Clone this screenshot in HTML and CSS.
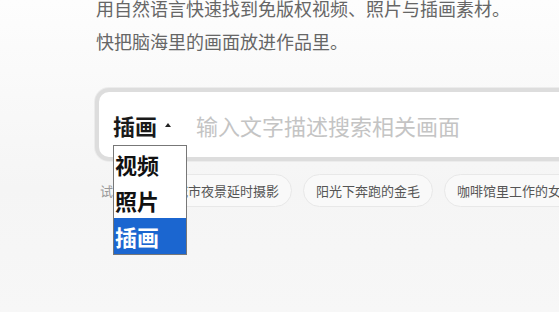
FILE: index.html
```html
<!DOCTYPE html>
<html lang="zh-CN">
<head>
<meta charset="utf-8">
<link rel="stylesheet" href="styles.css">
</head>
<body>
<main class="hero">
  <p class="intro">用自然语言快速找到免版权视频、照片与插画素材。<br>快把脑海里的画面放进作品里。</p>
  <div class="search">
    <div class="type">
      <span class="type-label">插画</span>
      <span class="caret"></span>
      <ul class="options">
        <li class="opt">视频</li>
        <li class="opt">照片</li>
        <li class="opt selected">插画</li>
      </ul>
    </div>
    <span class="placeholder">输入文字描述搜索相关画面</span>
  </div>
  <div class="tries">
    <span class="tries-label">试试看：</span>
    <span class="chip">城市夜景延时摄影</span>
    <span class="chip">阳光下奔跑的金毛</span>
    <span class="chip">咖啡馆里工作的女孩</span>
  </div>
</main>
</body>
</html>
```
FILE: styles.css
```css
html, body {
  margin: 0;
  padding: 0;
  height: 100%;
  overflow: hidden;
}
body {
  background: linear-gradient(#fdfdfd, #f5f5f5 60%, #f7f7f7);
  font-family: "Noto Sans CJK SC", "Noto Sans", sans-serif;
}
.hero {
  padding-left: 96px;
  width: 800px;
}
.intro {
  margin: -8px 0 0 0;
  font-size: 18px;
  line-height: 33px;
  color: #666;
}
.search {
  position: relative;
  margin: 30px 0 0 -1px;
  width: 700px;
  height: 65px;
  border: 4px solid #dddddd;
  border-radius: 14px;
  background: #fff;
  box-shadow: 0 0 0 1px #ececec;
  display: flex;
  align-items: center;
  padding-left: 14px;
}
.type {
  position: relative;
  display: flex;
  align-items: center;
  width: 83px;
}
.type-label {
  font-size: 22px;
  font-weight: 700;
  color: #1a1a1a;
}
.caret {
  margin-left: 8px;
  width: 0;
  height: 0;
  border-left: 3px solid transparent;
  border-right: 3px solid transparent;
  border-bottom: 4px solid #222;
}
.options {
  position: absolute;
  left: 0;
  top: 36px;
  margin: 0;
  padding: 0;
  list-style: none;
  width: 72px;
  background: #fff;
  border: 1px solid #777;
  z-index: 5;
}
.opt {
  height: 36px;
  line-height: 36px;
  padding-left: 1px;
  font-size: 22px;
  font-weight: 700;
  color: #111;
}
.opt.selected {
  background: #1b66d0;
  color: #fff;
}
.placeholder {
  font-size: 22px;
  color: #c4c4c4;
  white-space: nowrap;
}
.tries {
  margin-top: 13px;
  padding-left: 4px;
  display: flex;
  align-items: center;
  gap: 11px;
  white-space: nowrap;
}
.tries-label {
  font-size: 13px;
  color: #999;
  margin-right: -1px;
}
.chip {
  height: 31px;
  line-height: 31px;
  padding: 0 12px;
  border: 1px solid #e8e8e8;
  border-radius: 17px;
  background: #f9f9f9;
  font-size: 13px;
  color: #555;
}
```
